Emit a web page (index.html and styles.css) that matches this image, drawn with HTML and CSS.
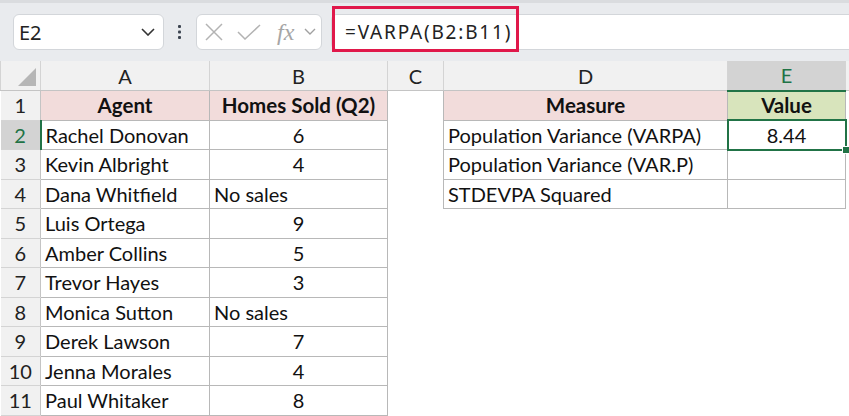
FILE: index.html
```html
<!DOCTYPE html>
<html lang="en">
<head>
    <meta charset="UTF-8">
    <meta name="viewport" content="width=device-width, initial-scale=1.0">
    <title>VARPA - Homes Sold</title>
    <link rel="stylesheet" href="styles.css">
</head>
<body>
    <div class="formula-bar">
        <div class="name-box">
            <span>E2</span>
            <svg class="chevron" width="14" height="8" viewBox="0 0 14 8"><path d="M1 1l6 6 6-6" fill="none" stroke="#333" stroke-width="1.6"/></svg>
        </div>
        <div class="dots">
            <svg width="6" height="16" viewBox="0 0 6 16"><rect x="1" y="1" width="3" height="3" rx="1" fill="#3c4450"/><rect x="1" y="6.5" width="3" height="3" rx="1" fill="#3c4450"/><rect x="1" y="12" width="3" height="3" rx="1" fill="#3c4450"/></svg>
        </div>
        <div class="fx-box">
            <svg width="18" height="18" viewBox="0 0 18 18"><path d="M1 1l16 16M17 1L1 17" stroke="#b3b3b3" stroke-width="1.5"/></svg>
            <svg width="24" height="16" viewBox="0 0 24 16"><path d="M1 8l7 7L23 1" fill="none" stroke="#b3b3b3" stroke-width="1.5"/></svg>
            <span class="fx">fx</span>
            <svg width="12" height="8" viewBox="0 0 12 8"><path d="M1 1l5 5 5-5" fill="none" stroke="#a0a0a0" stroke-width="1.4"/></svg>
        </div>
        <div class="formula-input">
            <span class="formula-text">=VARPA(B2:B11)</span>
        </div>
        <div class="highlight"></div>
    </div>

    <table class="sheet">
        <colgroup>
            <col style="width:40px">
            <col style="width:169px">
            <col style="width:178px">
            <col style="width:56px">
            <col style="width:284px">
            <col style="width:118px">
            <col>
        </colgroup>
        <tr class="col-heads">
            <th class="corner"><span class="tri"></span></th>
            <th>A</th>
            <th>B</th>
            <th>C</th>
            <th>D</th>
            <th class="active-col">E</th>
            <th></th>
        </tr>
        <tr>
            <th class="row-head">1</th>
            <td class="cell hdr">Agent</td>
            <td class="cell hdr">Homes Sold (Q2)</td>
            <td></td>
            <td class="cell hdr">Measure</td>
            <td class="cell hdr green">Value</td>
            <td></td>
        </tr>
        <tr>
            <th class="row-head active-row">2</th>
            <td class="cell">Rachel Donovan</td>
            <td class="cell num">6</td>
            <td></td>
            <td class="cell">Population Variance (VARPA)</td>
            <td class="cell num selected">8.44<span class="handle"></span></td>
            <td></td>
        </tr>
        <tr>
            <th class="row-head">3</th>
            <td class="cell">Kevin Albright</td>
            <td class="cell num">4</td>
            <td></td>
            <td class="cell">Population Variance (VAR.P)</td>
            <td class="cell num"></td>
            <td></td>
        </tr>
        <tr>
            <th class="row-head">4</th>
            <td class="cell">Dana Whitfield</td>
            <td class="cell">No sales</td>
            <td></td>
            <td class="cell">STDEVPA Squared</td>
            <td class="cell num"></td>
            <td></td>
        </tr>
        <tr>
            <th class="row-head">5</th>
            <td class="cell">Luis Ortega</td>
            <td class="cell num">9</td>
            <td></td><td></td><td></td><td></td>
        </tr>
        <tr>
            <th class="row-head">6</th>
            <td class="cell">Amber Collins</td>
            <td class="cell num">5</td>
            <td></td><td></td><td></td><td></td>
        </tr>
        <tr>
            <th class="row-head">7</th>
            <td class="cell">Trevor Hayes</td>
            <td class="cell num">3</td>
            <td></td><td></td><td></td><td></td>
        </tr>
        <tr>
            <th class="row-head">8</th>
            <td class="cell">Monica Sutton</td>
            <td class="cell">No sales</td>
            <td></td><td></td><td></td><td></td>
        </tr>
        <tr>
            <th class="row-head">9</th>
            <td class="cell">Derek Lawson</td>
            <td class="cell num">7</td>
            <td></td><td></td><td></td><td></td>
        </tr>
        <tr>
            <th class="row-head">10</th>
            <td class="cell">Jenna Morales</td>
            <td class="cell num">4</td>
            <td></td><td></td><td></td><td></td>
        </tr>
        <tr>
            <th class="row-head">11</th>
            <td class="cell">Paul Whitaker</td>
            <td class="cell num">8</td>
            <td></td><td></td><td></td><td></td>
        </tr>
    </table>
</body>
</html>
```

FILE: styles.css
```css
* {
    margin: 0;
    padding: 0;
    box-sizing: border-box;
}

body {
    background: white;
    font-family: Lato, "Liberation Sans", sans-serif;
    overflow: hidden;
}

/* formula bar */
.formula-bar {
    position: relative;
    height: 61px;
    background: #e9ebee;
    border-top: 3px solid #dadcdf;
    display: flex;
    align-items: center;
    padding-left: 13px;
    font-family: "Noto Sans", sans-serif;
}

.name-box {
    width: 151px;
    height: 36px;
    background: white;
    border: 1px solid #d3d6da;
    border-radius: 6px;
    display: flex;
    align-items: center;
    justify-content: space-between;
    padding: 0 8px 0 5px;
    font-size: 20px;
    color: #222;
}

.dots {
    width: 32px;
    display: flex;
    justify-content: center;
}

.fx-box {
    width: 126px;
    height: 36px;
    background: white;
    border: 1px solid #d3d6da;
    border-radius: 6px;
    display: flex;
    align-items: center;
    gap: 14px;
    padding-left: 8px;
}

.fx {
    font-family: "Liberation Serif", serif;
    font-style: italic;
    font-size: 24px;
    color: #a6a6a6;
    margin-left: 2px;
    margin-right: -4px;
}

.formula-input {
    flex: 1;
    height: 36px;
    margin-left: 9px;
    background: white;
    border: 1px solid #d3d6da;
    border-right: none;
    border-radius: 6px 0 0 6px;
    display: flex;
    align-items: center;
    padding-left: 13px;
}

.formula-text {
    font-size: 19px;
    letter-spacing: 1.8px;
    color: #222;
}

.highlight {
    position: absolute;
    left: 332px;
    top: 3px;
    width: 187px;
    height: 46px;
    border: 3px solid #e0184a;
}

/* sheet */
.sheet {
    width: 849px;
    table-layout: fixed;
    border-collapse: collapse;
    font-size: 20px;
    color: #111;
}

.sheet tr {
    height: 29.5px;
}

.col-heads {
    height: 28px;
}

.col-heads th {
    background: #f1f1f1;
    font-weight: normal;
    color: #222;
    border-left: 1px solid #d4d4d4;
    border-bottom: 1px solid #c4c4c4;
}

.corner {
    position: relative;
}

.tri {
    position: absolute;
    right: 4px;
    bottom: 4px;
    width: 0;
    height: 0;
    border-left: 18px solid transparent;
    border-bottom: 18px solid #b6b6b6;
}

.col-heads th.active-col {
    background: #d3d3d3;
    color: #217346;
    border-bottom: 2px solid #217346;
}

.row-head {
    background: #f1f1f1;
    font-weight: normal;
    color: #222;
    border-bottom: 1px solid #d4d4d4;
    border-right: 1px solid #c4c4c4;
}

.row-head.active-row {
    background: #d3d3d3;
    color: #217346;
    border-right: 2px solid #217346;
}

.cell {
    border: 1px solid #b8b8b8;
    padding: 0 4px;
    white-space: nowrap;
    overflow: hidden;
}

.hdr {
    background: #f2dcdb;
    font-weight: bold;
    font-size: 20.5px;
    text-align: center;
}

.hdr.green {
    background: #d8e4bc;
}

.num {
    text-align: center;
}

.selected {
    position: relative;
    overflow: visible;
    border: 2px solid #217346;
}

.handle {
    position: absolute;
    right: -5px;
    bottom: -5px;
    width: 8px;
    height: 8px;
    background: #217346;
    border: 1px solid white;
}
```
